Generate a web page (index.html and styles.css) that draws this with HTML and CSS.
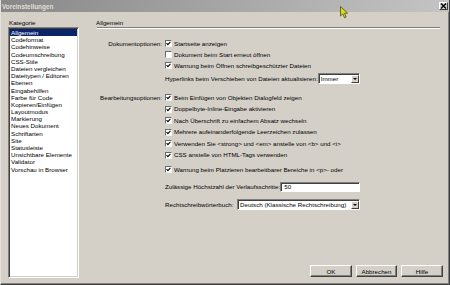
FILE: index.html
```html
<!DOCTYPE html>
<html lang="de">
<head>
<meta charset="utf-8">
<title>Voreinstellungen</title>
<link rel="stylesheet" href="styles.css">
</head>
<body>
<div class="window">
  <div class="titlebar">
    <span class="title">Voreinstellungen</span>
    <span class="close"><svg width="7" height="6" viewBox="0 0 7 6"><path d="M1 0.5 L6 5.5 M6 0.5 L1 5.5" stroke="#000" stroke-width="1.4"/></svg></span>
  </div>
  <div class="main">
    <div class="sidebar">
      <div class="cat-label">Kategorie</div>
      <ul class="list">
        <li class="selected">Allgemein</li>
        <li>Codeformat</li>
        <li>Codehinweise</li>
        <li>Codeumschreibung</li>
        <li>CSS-Stile</li>
        <li>Dateien vergleichen</li>
        <li>Dateitypen / Editoren</li>
        <li>Ebenen</li>
        <li>Eingabehilfen</li>
        <li>Farbe für Code</li>
        <li>Kopieren/Einfügen</li>
        <li>Layoutmodus</li>
        <li>Markierung</li>
        <li>Neues Dokument</li>
        <li>Schriftarten</li>
        <li>Site</li>
        <li>Statusleiste</li>
        <li>Unsichtbare Elemente</li>
        <li>Validator</li>
        <li>Vorschau in Browser</li>
      </ul>
    </div>
    <div class="panel">
      <div class="panel-head">Allgemein</div>
      <div class="groove"></div>

      <div class="group group-doc">
        <div class="group-label">Dokumentoptionen:</div>
        <div class="group-body">
          <div class="check-row"><span class="cb"><svg viewBox="0 0 5 5"><path d="M0.6 2.2 L1.9 3.6 L4.4 0.9" fill="none" stroke="#000" stroke-width="1.1"/></svg></span>Startseite anzeigen</div>
          <div class="check-row"><span class="cb"></span>Dokument beim Start erneut öffnen</div>
          <div class="check-row"><span class="cb"><svg viewBox="0 0 5 5"><path d="M0.6 2.2 L1.9 3.6 L4.4 0.9" fill="none" stroke="#000" stroke-width="1.1"/></svg></span>Warnung beim Öffnen schreibgeschützter Dateien</div>
          <div class="field-row field-links">
            <span>Hyperlinks beim Verschieben von Dateien aktualisieren:</span>
            <span class="select select-immer"><span class="select-text">Immer</span><span class="drop"></span></span>
          </div>
        </div>
      </div>

      <div class="group group-edit">
        <div class="group-label">Bearbeitungsoptionen:</div>
        <div class="group-body">
          <div class="check-row"><span class="cb"><svg viewBox="0 0 5 5"><path d="M0.6 2.2 L1.9 3.6 L4.4 0.9" fill="none" stroke="#000" stroke-width="1.1"/></svg></span>Beim Einfügen von Objekten Dialogfeld zeigen</div>
          <div class="check-row"><span class="cb"><svg viewBox="0 0 5 5"><path d="M0.6 2.2 L1.9 3.6 L4.4 0.9" fill="none" stroke="#000" stroke-width="1.1"/></svg></span>Doppelbyte-Inline-Eingabe aktivieren</div>
          <div class="check-row"><span class="cb"><svg viewBox="0 0 5 5"><path d="M0.6 2.2 L1.9 3.6 L4.4 0.9" fill="none" stroke="#000" stroke-width="1.1"/></svg></span>Nach Überschrift zu einfachem Absatz wechseln</div>
          <div class="check-row"><span class="cb"><svg viewBox="0 0 5 5"><path d="M0.6 2.2 L1.9 3.6 L4.4 0.9" fill="none" stroke="#000" stroke-width="1.1"/></svg></span>Mehrere aufeinanderfolgende Leerzeichen zulassen</div>
          <div class="check-row"><span class="cb"><svg viewBox="0 0 5 5"><path d="M0.6 2.2 L1.9 3.6 L4.4 0.9" fill="none" stroke="#000" stroke-width="1.1"/></svg></span>Verwenden Sie &lt;strong&gt; und &lt;em&gt; anstelle von &lt;b&gt; und &lt;i&gt;</div>
          <div class="check-row"><span class="cb"><svg viewBox="0 0 5 5"><path d="M0.6 2.2 L1.9 3.6 L4.4 0.9" fill="none" stroke="#000" stroke-width="1.1"/></svg></span>CSS anstelle von HTML-Tags verwenden</div>
          <div class="check-row warn-row"><span class="cb"><svg viewBox="0 0 5 5"><path d="M0.6 2.2 L1.9 3.6 L4.4 0.9" fill="none" stroke="#000" stroke-width="1.1"/></svg></span>Warnung beim Platzieren bearbeitbarer Bereiche in &lt;p&gt;- oder</div>
          <div class="field-row field-steps">
            <span>Zulässige Höchstzahl der Verlaufsschritte:</span>
            <span class="input">50</span>
          </div>
          <div class="field-row field-dict">
            <span>Rechtschreibwörterbuch:</span>
            <span class="select select-dict"><span class="select-text">Deutsch (Klassische Rechtschreibung)</span><span class="drop"></span></span>
          </div>
        </div>
      </div>

      <div class="buttons">
        <span class="btn btn-ok">OK</span>
        <span class="btn btn-cancel">Abbrechen</span>
        <span class="btn btn-help">Hilfe</span>
      </div>
    </div>
  </div>
  <svg class="cursor" width="9" height="13" viewBox="0 0 9 13"><path d="M0.5 0.5 L0.5 10 L2.8 7.8 L4.6 11.8 L6.2 11 L4.5 7.2 L7.6 7.2 Z" fill="#d8d820" stroke="#505010" stroke-width="0.8"/></svg>
</div>
</body>
</html>
```

FILE: styles.css
```css
* {
  box-sizing: border-box;
  margin: 0;
  padding: 0;
}

body {
  margin: 0;
  width: 450px;
  height: 285px;
  overflow: hidden;
  background: #d4d0c8;
  font-family: "Liberation Sans", Arial, sans-serif;
  font-size: 6.2px;
  color: #000;
}

.window {
  position: relative;
  width: 450px;
  height: 285px;
  display: flex;
  flex-direction: column;
  background: #d4d0c8;
  border-left: 1px solid #e4e2dc;
  border-right: 1px solid #404040;
  border-bottom: 1px solid #404040;
  box-shadow: inset -1px -1px 0 #808080;
}

.titlebar {
  flex: none;
  height: 12px;
  display: flex;
  align-items: center;
  justify-content: space-between;
  padding: 0 1px 0 1px;
  background: linear-gradient(to right, #888888, #c4c4c4);
}

.title {
  font-weight: bold;
  font-size: 6.4px;
  color: #e2ded6;
}

.close {
  width: 9px;
  height: 8px;
  display: flex;
  align-items: center;
  justify-content: center;
  background: #d4d0c8;
  border: 1px solid;
  border-color: #ffffff #404040 #404040 #ffffff;
}

.close svg {
  display: block;
}

.main {
  flex: 1;
  display: flex;
  padding: 6px 6px 6px 7px;
}

.sidebar {
  width: 71px;
  display: flex;
  flex-direction: column;
}

.cat-label {
  height: 9px;
  line-height: 9px;
  padding-left: 1px;
}

.list {
  flex: 1;
  list-style: none;
  background: #ffffff;
  border: 1px solid;
  border-color: #808080 #ffffff #ffffff #808080;
  box-shadow: inset 1px 1px 0 #404040, inset -1px -1px 0 #d4d0c8;
  padding: 1px 1px 0 1px;
}

.list li {
  height: 7.2px;
  line-height: 7.2px;
  padding-left: 1px;
  white-space: nowrap;
}

.list li.selected {
  background: #0a246a;
  color: #ffffff;
}

.panel {
  flex: 1;
  margin-left: 17px;
  display: flex;
  flex-direction: column;
}

.panel-head {
  height: 9px;
  line-height: 9px;
}

.groove {
  height: 2px;
  border-top: 1px solid #808080;
  border-bottom: 1px solid #ffffff;
  margin: 0 3px 0 1px;
}

.group {
  display: grid;
  grid-template-columns: 66px auto;
  column-gap: 3px;
}

.group-label {
  text-align: right;
  white-space: nowrap;
}

.group-doc {
  margin-top: 8.7px;
}

.group-doc .group-label,
.group-doc .check-row {
  height: 11.3px;
  line-height: 11.3px;
}

.group-edit {
  margin-top: 8px;
}

.group-edit .group-label,
.group-edit .check-row {
  height: 11.5px;
  line-height: 11.5px;
}

.check-row {
  display: flex;
  align-items: center;
  gap: 2px;
  white-space: nowrap;
}

.cb {
  flex: none;
  width: 7px;
  height: 7px;
  background: #ffffff;
  border: 1px solid;
  border-color: #6a6a6a #f4f4f4 #f4f4f4 #6a6a6a;
  display: flex;
  align-items: center;
  justify-content: center;
}

.cb svg {
  width: 5px;
  height: 5px;
  display: block;
}

.warn-row {
  margin-top: 3.25px;
}

.field-row {
  width: 195px;
  display: flex;
  align-items: center;
  white-space: nowrap;
}

.field-row > span:first-child {
  flex: none;
}

.field-links {
  height: 11px;
  margin-top: 1.4px;
}

.field-steps {
  height: 10px;
  margin-top: 6.25px;
}

.field-dict {
  height: 11px;
  margin-top: 7px;
}

.select,
.input {
  margin-left: auto;
  background: #ffffff;
  border: 1px solid;
  border-color: #808080 #ffffff #ffffff #808080;
  box-shadow: inset 1px 1px 0 #404040;
  display: flex;
  align-items: center;
  height: 100%;
}

.input {
  width: 81px;
  padding-left: 3px;
}

.select {
  padding: 1px 0 0 1px;
}

.select-immer {
  width: 44px;
}

.select-dict {
  width: 123px;
}

.select-text {
  flex: 1;
  padding-left: 1px;
  overflow: hidden;
}

.drop {
  flex: none;
  align-self: stretch;
  width: 8px;
  background: #d4d0c8;
  border: 1px solid;
  border-color: #ffffff #404040 #404040 #ffffff;
  display: flex;
  align-items: center;
  justify-content: center;
}

.drop::after {
  content: "";
  width: 0;
  height: 0;
  border-left: 2px solid transparent;
  border-right: 2px solid transparent;
  border-top: 2px solid #000;
}

.buttons {
  margin-top: auto;
  margin-bottom: 1px;
  display: flex;
  justify-content: flex-end;
  gap: 4px;
}

.btn {
  height: 12px;
  display: flex;
  align-items: center;
  justify-content: center;
  background: #d4d0c8;
  border: 1px solid;
  border-color: #ffffff #404040 #404040 #ffffff;
  box-shadow: inset -1px -1px 0 #808080;
}

.btn-ok,
.btn-help {
  width: 42px;
}

.btn-cancel {
  width: 41px;
}

.cursor {
  position: absolute;
  left: 339px;
  top: 6px;
}
```
